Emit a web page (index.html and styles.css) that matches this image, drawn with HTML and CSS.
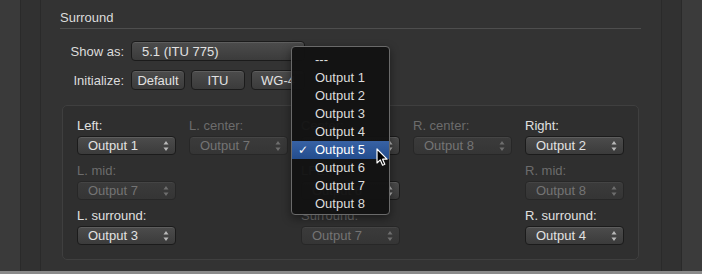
FILE: index.html
```html
<!DOCTYPE html>
<html>
<head>
<meta charset="utf-8">
<link rel="stylesheet" href="styles.css">
</head>
<body>
<div class="window">
  <div class="side side-left"><div class="strip strip-outer"></div><div class="strip strip-inner"></div></div>
  <main class="panel">
    <h2 class="section-title">Surround</h2>
    <div class="form-row">
      <span class="form-label">Show as:</span>
      <div class="popup popup-wide"><span>5.1 (ITU 775)</span></div>
    </div>
    <div class="form-row form-row-buttons">
      <span class="form-label">Initialize:</span>
      <button class="btn">Default</button>
      <button class="btn">ITU</button>
      <button class="btn">WG-4</button>
    </div>
    <div class="group">
      <div class="grid">
        <div class="cell"><div class="lbl">Left:</div><div class="popup"><span>Output 1</span><svg class="arrows" viewBox="0 0 6 12"><path d="M0.5 4.5 L3 1 L5.5 4.5 Z M0.5 7.5 L3 11 L5.5 7.5 Z"/></svg></div></div>
        <div class="cell off"><div class="lbl">L. center:</div><div class="popup"><span>Output 7</span><svg class="arrows" viewBox="0 0 6 12"><path d="M0.5 4.5 L3 1 L5.5 4.5 Z M0.5 7.5 L3 11 L5.5 7.5 Z"/></svg></div></div>
        <div class="cell"><div class="lbl">Center:</div><div class="popup"><span>Output 5</span><svg class="arrows" viewBox="0 0 6 12"><path d="M0.5 4.5 L3 1 L5.5 4.5 Z M0.5 7.5 L3 11 L5.5 7.5 Z"/></svg></div></div>
        <div class="cell off"><div class="lbl">R. center:</div><div class="popup"><span>Output 8</span><svg class="arrows" viewBox="0 0 6 12"><path d="M0.5 4.5 L3 1 L5.5 4.5 Z M0.5 7.5 L3 11 L5.5 7.5 Z"/></svg></div></div>
        <div class="cell"><div class="lbl">Right:</div><div class="popup"><span>Output 2</span><svg class="arrows" viewBox="0 0 6 12"><path d="M0.5 4.5 L3 1 L5.5 4.5 Z M0.5 7.5 L3 11 L5.5 7.5 Z"/></svg></div></div>

        <div class="cell off"><div class="lbl">L. mid:</div><div class="popup"><span>Output 7</span><svg class="arrows" viewBox="0 0 6 12"><path d="M0.5 4.5 L3 1 L5.5 4.5 Z M0.5 7.5 L3 11 L5.5 7.5 Z"/></svg></div></div>
        <div class="cell"></div>
        <div class="cell"><div class="lbl">LFE:</div><div class="popup"><span>Output 6</span><svg class="arrows" viewBox="0 0 6 12"><path d="M0.5 4.5 L3 1 L5.5 4.5 Z M0.5 7.5 L3 11 L5.5 7.5 Z"/></svg></div></div>
        <div class="cell"></div>
        <div class="cell off"><div class="lbl">R. mid:</div><div class="popup"><span>Output 8</span><svg class="arrows" viewBox="0 0 6 12"><path d="M0.5 4.5 L3 1 L5.5 4.5 Z M0.5 7.5 L3 11 L5.5 7.5 Z"/></svg></div></div>

        <div class="cell"><div class="lbl">L. surround:</div><div class="popup"><span>Output 3</span><svg class="arrows" viewBox="0 0 6 12"><path d="M0.5 4.5 L3 1 L5.5 4.5 Z M0.5 7.5 L3 11 L5.5 7.5 Z"/></svg></div></div>
        <div class="cell"></div>
        <div class="cell off"><div class="lbl">Surround:</div><div class="popup"><span>Output 7</span><svg class="arrows" viewBox="0 0 6 12"><path d="M0.5 4.5 L3 1 L5.5 4.5 Z M0.5 7.5 L3 11 L5.5 7.5 Z"/></svg></div></div>
        <div class="cell"></div>
        <div class="cell"><div class="lbl">R. surround:</div><div class="popup"><span>Output 4</span><svg class="arrows" viewBox="0 0 6 12"><path d="M0.5 4.5 L3 1 L5.5 4.5 Z M0.5 7.5 L3 11 L5.5 7.5 Z"/></svg></div></div>
      </div>
    </div>
  </main>
  <div class="side side-right"><div class="strip strip-inner-r"></div><div class="strip strip-outer-r"></div></div>

  <div class="menu">
    <div class="item">---</div>
    <div class="item">Output 1</div>
    <div class="item">Output 2</div>
    <div class="item">Output 3</div>
    <div class="item">Output 4</div>
    <div class="item selected"><span class="check">✓</span>Output 5</div>
    <div class="item">Output 6</div>
    <div class="item">Output 7</div>
    <div class="item">Output 8</div>
  </div>
  <svg class="cursor" viewBox="0 0 13 19" width="13" height="19"><path d="M1 1 L1 15 L4.3 11.9 L6.6 17.2 L8.8 16.3 L6.6 11.2 L11 11.2 Z" fill="#000" stroke="#fff" stroke-width="1.2" stroke-linejoin="round"/></svg>
</div>
<div class="bottom-strip"></div>
</body>
</html>
```
FILE: styles.css
```css
html, body {
  margin: 0;
  padding: 0;
  background: #333333;
}
body {
  width: 702px;
  height: 274px;
  overflow: hidden;
  font-family: "Liberation Sans", Arial, sans-serif;
  font-size: 13px;
  color: #dedede;
}
.window {
  position: relative;
  display: flex;
  height: 271px;
}
.side {
  display: flex;
  flex: 0 0 41px;
}
.strip { height: 100%; }
.strip-outer { width: 20px; background: #3a3a3a; border-right: 1px solid #2a2a2a; }
.strip-inner { width: 19px; background: #313131; border-right: 1px solid #2a2a2a; }
.strip-inner-r { width: 19px; background: #313131; border-left: 1px solid #2a2a2a; }
.strip-outer-r { width: 20px; background: #3b3b3b; border-left: 1px solid #2a2a2a; }
.panel {
  flex: 0 0 620px;
  box-sizing: border-box;
  padding: 10px 20px 0 19px;
  background: #333333;
}
.section-title {
  margin: 0;
  font-size: 13px;
  font-weight: normal;
  line-height: 16px;
  padding-bottom: 2px;
  border-bottom: 1px solid #4e4e4e;
  color: #dcdcdc;
}
.form-row {
  display: flex;
  align-items: center;
  margin-top: 12px;
  height: 20px;
}
.form-row-buttons {
  margin-top: 9px;
  gap: 6px;
}
.form-label {
  width: 64px;
  text-align: right;
  margin-right: 7px;
  color: #dcdcdc;
}
.form-row-buttons .form-label { margin-right: 1px; }
.btn {
  width: 54px;
  height: 20px;
  box-sizing: border-box;
  padding: 0;
  font-family: inherit;
  font-size: 13px;
  color: #e2e2e2;
  border: 1px solid #1b1b1b;
  border-radius: 4px;
  background: linear-gradient(#4c4c4c, #3b3b3b);
  box-shadow: inset 0 1px 0 rgba(255,255,255,0.10);
}
.popup {
  display: flex;
  align-items: center;
  justify-content: space-between;
  box-sizing: border-box;
  height: 19px;
  padding: 0 6px 0 10px;
  border: 1px solid #1b1b1b;
  border-radius: 4px;
  background: linear-gradient(#4c4c4c, #3b3b3b);
  box-shadow: inset 0 1px 0 rgba(255,255,255,0.10);
  color: #e2e2e2;
  white-space: nowrap;
}
.popup-wide {
  width: 174px;
  height: 20px;
}
.arrows {
  width: 6px;
  height: 12px;
  fill: #b8b8b8;
}
.group {
  margin: 15px 2px 0 2px;
  border: 1px solid #3f3f3f;
  border-radius: 5px;
  background: #2f2f2f;
  padding: 12px 14px 14px 14px;
}
.grid {
  display: grid;
  grid-template-columns: repeat(5, 99px);
  column-gap: 13px;
  row-gap: 8px;
}
.cell { height: 37px; }
.lbl {
  line-height: 16px;
  height: 16px;
  margin-bottom: 2px;
  color: #e0e0e0;
  white-space: nowrap;
}
.off .lbl { color: #6c6c6c; }
.off .popup {
  background: linear-gradient(#3b3b3b, #353535);
  border-color: #272727;
  color: #747474;
  box-shadow: inset 0 1px 0 rgba(255,255,255,0.05);
}
.off .arrows { fill: #6e6e6e; }
.bottom-strip {
  height: 3px;
  background: #8a8a8a;
}
.menu {
  position: absolute;
  left: 291px;
  top: 46px;
  width: 99px;
  height: 169px;
  box-sizing: border-box;
  padding: 4px 0 0 0;
  background: rgba(18,18,18,0.975);
  border: 1px solid #6a6a6a;
  border-radius: 4px;
  box-shadow: 0 3px 10px rgba(0,0,0,0.45);
}
.item {
  position: relative;
  height: 18px;
  line-height: 18px;
  padding-left: 23px;
  color: #dcdcdc;
  font-size: 13px;
}
.item.selected {
  background: linear-gradient(#3862a4, #234d8e);
  color: #ffffff;
}
.check {
  position: absolute;
  left: 6px;
  top: 0;
  font-family: "DejaVu Sans", sans-serif;
  font-size: 12px;
}
.cursor {
  position: absolute;
  left: 376px;
  top: 148px;
}
```
